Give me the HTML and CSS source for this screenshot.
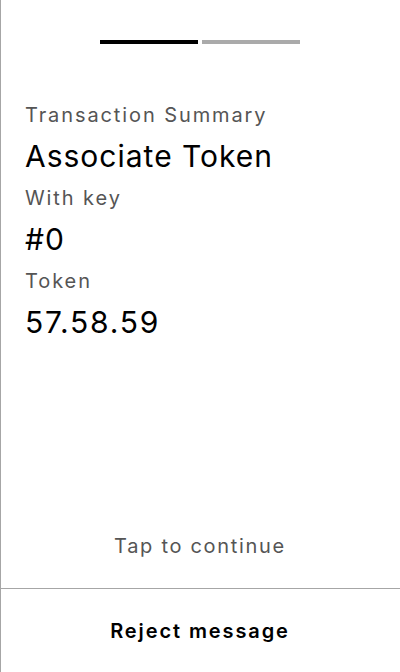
FILE: index.html
```html
<!DOCTYPE html>
<html>
<head>
<meta charset="utf-8">
<link rel="stylesheet" href="styles.css">
</head>
<body>
<div class="screen">
  <div class="progress">
    <div class="bar bar-active"></div>
    <div class="bar bar-inactive"></div>
  </div>
  <div class="summary">
    <div class="label">Transaction Summary</div>
    <div class="value">Associate Token</div>
    <div class="label">With key</div>
    <div class="value">#0</div>
    <div class="label">Token</div>
    <div class="value value-num">57.58.59</div>
  </div>
  <div class="spacer"></div>
  <div class="tap">Tap to continue</div>
  <div class="footer">Reject message</div>
</div>
</body>
</html>
```
FILE: styles.css
```css
html, body {
  margin: 0;
  padding: 0;
  background: #fff;
}
.screen {
  height: 672px;
  box-sizing: border-box;
  box-shadow: inset 1px 0 0 #a6a6a6;
  display: flex;
  flex-direction: column;
  font-family: Inter, "Noto Sans", sans-serif;
  color: #000;
}
.progress {
  display: flex;
  justify-content: center;
  gap: 4px;
  padding-top: 40px;
}
.bar {
  width: 98px;
  height: 4px;
}
.bar-active { background: #000; }
.bar-inactive { background: #aaaaaa; }
.summary {
  padding: 59px 25px 0 25px;
  display: flex;
  flex-direction: column;
}
.label {
  font-size: 20px;
  line-height: 24px;
  letter-spacing: 1.9px;
  color: #555;
}
.value {
  font-size: 30px;
  line-height: 36px;
  letter-spacing: 1px;
  margin-top: 11px;
  margin-bottom: 12px;
}
.value-num {
  letter-spacing: 1.8px;
}
.spacer { flex: 1; }
.tap {
  text-align: center;
  font-size: 20px;
  line-height: 24px;
  letter-spacing: 1.7px;
  color: #555;
  margin-bottom: 30px;
}
.footer {
  border-top: 1px solid #a6a6a6;
  height: 83px;
  display: flex;
  align-items: center;
  justify-content: center;
  font-size: 20px;
  font-weight: 600;
  letter-spacing: 1.9px;
}
```
